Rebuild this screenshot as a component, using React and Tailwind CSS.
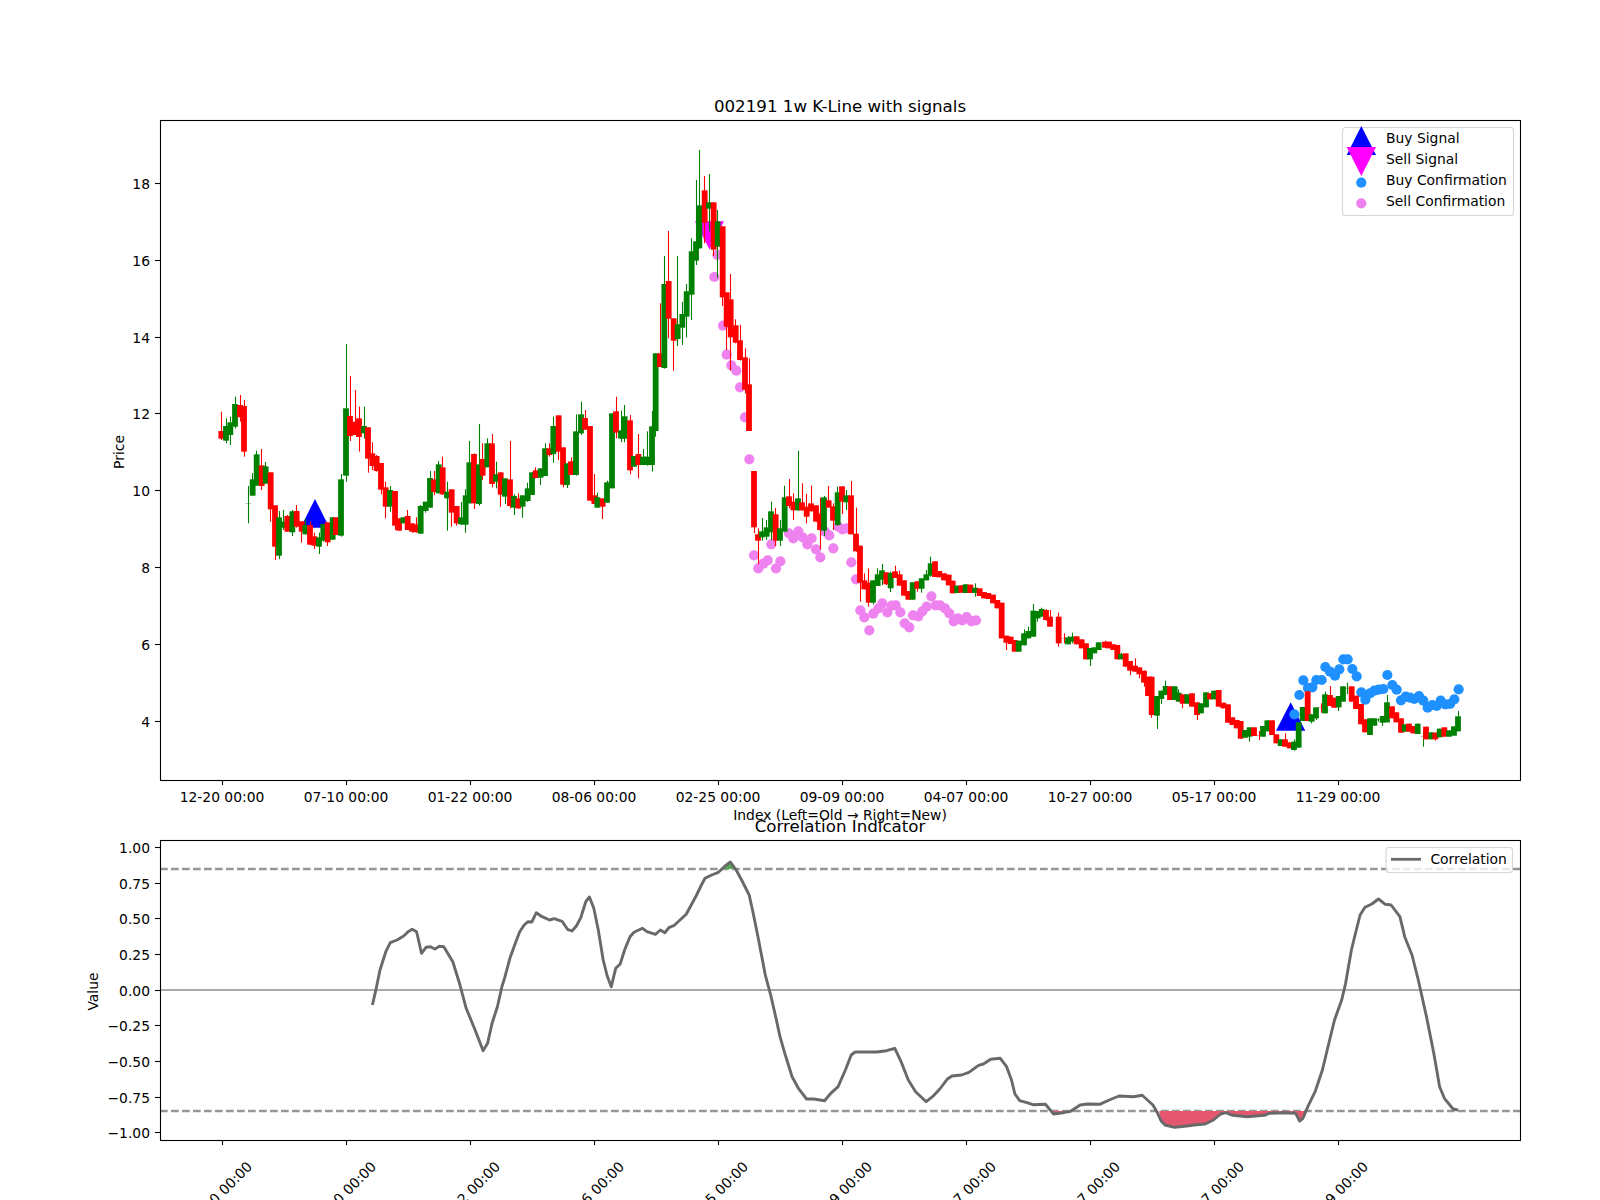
const RED = "#ff0000";
const GREEN = "#008000";

// rows: [x, isRed, bodyTop, bodyBottom, wickTop?, wickBottom?] in crop coordinates
const scale = (ox, oy, rows) =>
  rows.map(([x, r, t, b, wt = t, wb = b]) => ({
    x: ox + x / 3,
    r,
    t: oy + t / 3,
    b: oy + b / 3,
    wt: oy + wt / 3,
    wb: oy + wb / 3,
  }));

const candles = [
  ...scale(200, 360, [
    [64,1,213,236,155,240],[78,0,198,242,175,250],[91,0,187,225,170,255],[105,0,132,200,110,205],[120,1,135,172,105,185],[132,1,138,275,120,290],
    [145,0,430,431,378,490],[158,0,358,407,340,407],[170,0,283,377,272,377],[185,1,316,378,267,390],[197,0,319,371,306,371],[212,1,337,448,337,485],
    [225,1,436,560,436,600],[237,0,472,587,453,597],[250,0,485,503,450,510],[262,1,468,515,465,516],[277,0,454,517,450,528],[290,1,453,500,435,503],
    [305,1,484,515,484,548],[316,0,495,523,475,523],[330,1,495,554,485,555],[343,1,529,557,518,567],[357,0,532,560,518,582],[370,0,492,542,492,545],
    [383,1,487,547,487,558],[398,0,472,539,472,540],[408,1,472,525],[423,0,358,527,342,530],[438,0,145,347,-48,365],[450,1,168,228,48,243],
    [465,1,185,225,90,225],[477,1,175,231,140,275],[492,0,198,220,140,236],[504,1,202,296,202,338],[517,1,280,318,247,330],[530,1,288,333,285,335],
    [543,1,309,389,309,403],[557,1,382,440,365,475],[570,0,390,440,378,455],[585,1,393,497,393,510],[597,1,475,512],[610,0,472,490],
    [623,1,468,510,450,510],[636,1,490,515,490,518],[648,1,493,517,472,518],[662,0,438,521,435,521],[677,0,425,453,425,458],[690,0,354,443,333,443],
    [702,1,358,396,333,405],[716,0,313,400,303,400],[728,1,322,403,290,405],[741,0,395,415,365,512],[755,1,388,458,388,500],[770,1,438,490,438,497],
    [783,0,472,493,426,495],[797,0,406,494,388,518],[808,0,307,430,243,430],[822,1,282,430,280,447],[837,0,313,432,192,437],
  ]),
  ...scale(480, 360, [
    [8,1,297,347,250,360],[22,0,250,322,235,322],[36,1,250,372,222,382],[48,0,343,365,305,385],[62,1,337,404,337,440],[75,0,355,410,355,432],
    [90,1,358,438,243,445],[102,0,408,443,403,465],[115,1,415,445,400,447],[128,0,406,440,406,473],[143,0,385,423,368,426],[156,0,337,405],
    [167,1,331,354,322,355],[182,0,325,353,325,375],[195,0,265,348,250,348],[208,1,265,285,250,290],[220,0,198,282,170,308],[236,1,166,275,166,300],
    [249,1,262,374,262,382],[261,0,310,375,310,384],[273,1,304,345,292,345],[288,0,214,345,163,347],[303,0,163,220,125,225],[315,1,174,209,150,209],
    [330,1,198,422],[343,1,406,432,342,432],[352,0,412,443,398,443],[368,1,415,440,415,477],[381,0,367,428,362,428],[396,0,160,385],
    [408,1,154,218,110,235],[423,0,211,236,152,247],[434,0,169,236,135,247],[450,1,181,331,165,343],[462,0,288,320],[475,1,282,315,222,355],
    [489,0,290,315,267,315],[502,0,290,315,214,317],[516,0,199,315,153,335],
  ]),
  ...scale(620, 130, [
    [107,0,670,903,670,920],[120,1,670,711,520,711],[133,0,462,714,378,716],[146,1,453,566,303,625],[161,1,565,632,565,722],[173,0,583,627,378,648],
    [187,0,552,593,515,645],[200,0,484,560,462,622],[215,0,364,494,325,570],[228,0,334,392,150,405],[238,0,226,355,60,355],[254,1,181,278,138,340],
    [267,0,217,236,132,303],[281,1,217,359,217,378],[293,0,274,350,240,443],[308,1,289,502,289,528],[320,1,487,590,487,660],[332,1,508,622,432,722],
    [347,1,586,638,568,640],[360,1,631,690,585,692],[375,1,682,779,655,790],[387,1,763,903,685,903],
  ]),
  ...scale(730, 420, [
    [72,1,153,322,153,340],[84,1,343,362,325,432],[96,0,334,352,294,362],[110,0,322,350,300,360],[123,0,274,337,245,360],[137,1,283,362,264,378],
    [150,0,325,362,300,378],[164,0,232,335,197,335],[177,1,229,258,177,265],[190,1,245,271,220,300],[204,0,235,271,92,272],[216,1,247,271,190,272],
    [230,1,260,290,222,310],[243,1,250,274,197,274],[258,1,256,305],[270,1,281,330,233,388],[282,0,232,332,228,348],[296,1,241,263,198,263],
    [309,1,259,302,250,330],[323,0,217,315,200,318],[336,1,199,245,199,282],[349,0,226,247,210,270],[363,1,226,343,183,343],[378,1,341,394,263,395],
    [390,1,377,488,377,545],[403,1,481,508,460,508],[416,1,488,548,445,560],[429,0,481,548,481,553],[443,0,463,498,445,498],[456,0,451,479,432,495],
    [469,1,457,493,457,495],[482,0,459,505,455,516],[495,1,454,474,437,474],[509,1,463,497,452,497],[522,1,481,527],[535,1,513,539],[548,0,487,539],
    [562,1,484,506,484,515],[575,0,475,506,475,518],[589,0,463,481,450,481],[602,0,430,467,410,470],[615,1,424,471],[628,1,453,472],[642,1,460,481],
    [656,1,464,496],[668,1,482,520],[681,0,497,519],[694,1,496,518],[707,0,493,519],[721,1,494,519],[735,0,503,519,490,530],[749,1,505,528],
    [762,1,516,535],[775,1,519,537],[789,1,524,550],[802,1,540,565],[815,1,548,655],[829,1,647,668,647,690],[842,1,650,672],[854,1,660,695],
    [866,0,662,695],[882,0,640,676,628,676],[895,0,633,655,620,655],
  ]),
  ...scale(1010, 560, [
    [70,0,152,230,132,230],[83,0,153,175,153,185],[95,0,147,170,143,170],[108,1,150,180,148,182],[120,1,170,200,150,200],[146,1,170,250,158,260],
    [163,1,235,236,220,250],[174,0,232,253,228,253],[187,0,230,245,218,250],[200,1,229,253],[215,1,238,265],[228,1,250,298],[240,0,264,298,264,318],
    [253,0,262,280],[266,0,247,270],[285,1,245,263,242,265],[297,1,245,265],[310,1,253,270],[322,1,255,298],[333,0,282,298,278,298],[347,1,280,320],
    [360,1,303,332,303,345],[375,1,317,335,295,335],[388,1,322,343,322,355],[402,1,332,368,332,380],[414,1,350,408],[425,1,350,465,350,473],
    [441,0,408,467,408,507],[454,0,392,417,392,432],[467,0,378,405,362,405],[480,1,379,420],[494,0,379,420],[506,0,398,425,388,425],[518,1,403,431,403,445],
    [532,0,403,431],[546,1,400,440],[561,1,427,465,427,480],[573,0,430,460],[588,0,397,442],[600,1,400,418],[612,0,392,418],[626,1,390,440],[640,1,428,445],
    [654,1,433,488],[667,1,472,495],[680,1,480,505],[692,1,483,536],[705,0,510,533],[719,0,502,530,502,545],[732,1,502,528],[747,1,526,527,513,540],
    [759,0,498,530],[772,0,481,514],[786,1,481,525],[799,1,523,550],[812,0,538,558],[825,1,538,560,520,560],[839,1,547,565],[852,0,545,570,538,572],
    [866,0,487,563],[878,0,441,483],[893,1,394,483],
  ]),
  ...scale(1260, 630, [
    [155,0,253,275,253,280],[168,0,232,265,232,270],[183,1,233,234,220,248],[195,0,193,250,185,250],[210,1,195,228,168,228],[222,1,203,233],
    [236,0,198,232,198,243],[249,0,169,215],[263,0,175,176,158,192],[275,1,169,215],[288,1,197,237],[303,1,222,283],[315,1,268,307],[330,0,265,315],
    [343,0,265,287],[355,0,269,270,265,275],[368,0,258,278,258,288],[381,0,217,277,195,277],[396,1,229,265],[409,1,247,277],[423,1,265,308],[434,0,283,305],
    [447,1,281,305],[460,1,288,310],[473,0,281,312],[490,0,320,321,305,350],[498,1,290,328],[514,0,307,328],[526,1,308,328,308,332],[539,0,296,322],
    [553,1,292,320],[567,0,301,320],[582,0,289,317],[594,0,259,304,243,304],
  ]),
];

const violet = [
  ...[[292,375],[283,441],[309,587],[320,674],[334,706],[349,722],[360,772],[375,862]].map(([x, y]) => [620 + x / 3, 130 + y / 3]),
  ...[[58,118],[72,406],[85,445],[100,431],[113,421],[124,373],[138,445],[151,424],[177,340],[190,355],[205,334],[218,352],[232,373],[245,355],[258,388],[271,412],[285,335],[298,346],[310,385],[325,320],[337,328],[350,325],[364,427],[378,478],[391,571],[403,592],[418,631],[430,581],[445,565],[457,550],[472,577],[485,557],[497,556],[511,577],[524,610],[538,622],[549,586],[565,589],[577,574],[590,560],[604,529],[617,556],[630,556],[645,565],[658,580],[671,604],[684,595],[697,601],[710,591],[724,604],[738,601]].map(([x, y]) => [730 + x / 3, 420 + y / 3]),
];

const blue = [[103,253],[118,195],[130,151],[144,174],[157,172],[169,150],[185,150],[196,111],[210,125],[225,137],[238,118],[250,88],[263,88],[277,117],[290,139],[304,187],[316,209],[330,190],[343,182],[356,179],[370,177],[382,135],[397,165],[410,179],[423,211],[437,200],[450,203],[463,207],[477,198],[490,212],[503,233],[517,225],[530,228],[542,212],[556,223],[570,222],[583,208],[596,178]].map(([x, y]) => [1260 + x / 3, 630 + y / 3]);

const c9 = ([x, y]) => [80 + x / 2.24, 790 + y / 3];
const c10 = ([x, y]) => [780 + x / 2.065, 790 + y / 3];
const toPts = (a) => a.map(([x, y]) => `${x.toFixed(1)},${y.toFixed(1)}`).join(" ");

const corr = [
  ...[[655,645],[662,605],[672,540],[685,485],[695,458],[710,450],[725,438],[735,425],[744,418],[754,425],[765,490],[775,472],[785,470],[795,477],[805,469],[815,470],[835,515],[850,580],[865,655],[885,720],[903,782],[913,760],[923,700],[935,650],[945,590],[952,560],[963,505],[975,460],[985,425],[995,405],[1003,395],[1012,396],[1022,368],[1035,380],[1052,390],[1062,386],[1080,394],[1092,418],[1102,423],[1112,408],[1122,382],[1133,335],[1141,321],[1151,355],[1161,420],[1172,510],[1181,558],[1190,590],[1200,535],[1210,522],[1220,480],[1232,440],[1241,427],[1260,415],[1270,425],[1289,433],[1300,420],[1310,428],[1320,412],[1330,407],[1358,373],[1380,318],[1392,285],[1400,265],[1415,255],[1430,247],[1445,228],[1457,216],[1470,240],[1482,270],[1499,315],[1508,370],[1520,450],[1535,555],[1548,620],[1560,690],[1568,740]].map(c9),
  ...[[10,790],[25,860],[38,895],[55,927],[70,927],[92,932],[105,910],[120,890],[135,840],[147,795],[155,786],[170,786],[200,786],[220,782],[237,775],[250,815],[265,870],[280,905],[302,935],[315,920],[330,897],[345,868],[355,858],[375,855],[390,847],[410,826],[420,822],[435,808],[455,805],[468,830],[478,870],[485,912],[495,932],[510,938],[522,944],[548,943],[565,972],[585,968],[600,964],[620,945],[635,942],[660,943],[680,930],[700,918],[730,920],[748,916],[770,945],[780,970],[787,993],[795,1005],[815,1012],[840,1008],[860,1004],[878,1002],[895,990],[910,972],[920,968],[935,976],[965,980],[1000,976],[1010,970],[1040,968],[1065,970],[1073,993],[1080,985],[1090,950],[1105,905],[1120,840],[1130,780],[1145,690],[1160,630],[1168,580],[1180,480],[1190,420],[1198,375],[1208,352],[1222,342],[1236,327],[1250,343],[1262,345],[1280,380],[1290,440],[1305,495],[1318,570],[1335,680],[1350,790],[1362,890],[1372,925],[1390,957],[1400,960]].map(c10),
];

const fillRed1 = [[558,963],[565,972],[585,968],[597,963]].map(c10);
const fillRed2 = [[783,963],[787,993],[795,1005],[815,1012],[840,1008],[860,1004],[878,1002],[895,990],[910,972],[920,968],[935,976],[965,980],[1000,976],[1010,970],[1040,968],[1065,970],[1073,993],[1080,985],[1086,963]].map(c10);
const fillGreen = [[1437,237],[1445,228],[1457,216],[1468,237]].map(c9);

const xTicks = [
  [222.5, "12-20 00:00"], [346.5, "07-10 00:00"], [470.5, "01-22 00:00"], [594.5, "08-06 00:00"], [718.5, "02-25 00:00"],
  [842.5, "09-09 00:00"], [966.5, "04-07 00:00"], [1090.5, "10-27 00:00"], [1214.5, "05-17 00:00"], [1338.5, "11-29 00:00"],
];
const snap = (v) => Math.floor(v) + 0.5;
const yMain = [18, 16, 14, 12, 10, 8, 6, 4].map((v) => [snap(183.4 + (18 - v) * 38.41), String(v)]);
const yLow = [
  ["1.00", 1], ["0.75", 0.75], ["0.50", 0.5], ["0.25", 0.25], ["0.00", 0],
  ["\u22120.25", -0.25], ["\u22120.50", -0.5], ["\u22120.75", -0.75], ["\u22121.00", -1],
].map(([s, v]) => [snap(990.2 - v * 142.6), s]);

function Ticks() {
  return (
    <g stroke="#000" strokeWidth="1.1">
      {xTicks.map(([x]) => (
        <g key={x}>
          <line x1={x} x2={x} y1="780" y2="785" />
          <line x1={x} x2={x} y1="1140" y2="1145" />
        </g>
      ))}
      {yMain.map(([y]) => <line key={y} x1="155" x2="160" y1={y} y2={y} />)}
      {yLow.map(([y]) => <line key={y} x1="155" x2="160" y1={y} y2={y} />)}
    </g>
  );
}

export default function App() {
  return (
    <div className="w-[1600px] h-[1200px] bg-white overflow-hidden">
      <svg width="1600" height="1200" viewBox="0 0 1600 1200" className="block font-['DejaVu_Sans',sans-serif] text-[13.89px]">
        <text x="840" y="111.7" textAnchor="middle" className="text-[16.67px]">002191 1w K-Line with signals</text>

        {/* main panel markers */}
        <polygon points="315,499 300.5,527.7 329.5,527.7" fill="#0000ff" />
        <polygon points="1290.7,702.3 1276,730.7 1305.3,730.7" fill="#0000ff" />
        <polygon points="695,221.3 724,221.3 709.5,249.6" fill="#ff00ff" />
        {violet.map(([x, y], i) => <circle key={i} cx={x} cy={y} r="5.1" fill="#ee82ee" />)}
        {blue.map(([x, y], i) => <circle key={i} cx={x} cy={y} r="5.1" fill="#1e90ff" />)}

        {candles.map((c, i) => (
          <g key={i} fill={c.r ? RED : GREEN} stroke={c.r ? RED : GREEN}>
            <line x1={snap(c.x)} x2={snap(c.x)} y1={c.wt} y2={c.wb} strokeWidth="1.1" />
            <rect x={c.x - 2.9} y={c.t} width="5.8" height={Math.max(c.b - c.t, 0.3)} stroke="none" />
          </g>
        ))}

        <rect x="160.5" y="120.5" width="1360" height="660" fill="none" stroke="#000" strokeWidth="1.1" />

        {/* legend */}
        <rect x="1342.5" y="127.5" width="171" height="88" rx="3" fill="#fff" fillOpacity="0.8" stroke="#ccc" strokeOpacity="0.8" strokeWidth="1.1" />
        <polygon points="1361.3,126 1346.7,155 1376,155" fill="#0000ff" />
        <polygon points="1346.7,147 1376,147 1361.3,176" fill="#ff00ff" />
        <circle cx="1361.3" cy="182.7" r="5.1" fill="#1e90ff" />
        <circle cx="1361.3" cy="203.3" r="5.1" fill="#ee82ee" />
        <text x="1386" y="143.3">Buy Signal</text>
        <text x="1386" y="164.3">Sell Signal</text>
        <text x="1386" y="185">Buy Confirmation</text>
        <text x="1386" y="206">Sell Confirmation</text>

        {/* labels of the main panel */}
        {xTicks.map(([x, s]) => <text key={s} x={x - 0.5} y="802" textAnchor="middle">{s}</text>)}
        {yMain.map(([y, s]) => <text key={s} x="150" y={y + 5} textAnchor="end">{s}</text>)}
        <text x="840" y="820" textAnchor="middle">Index (Left=Old → Right=New)</text>
        <text transform="translate(124,452) rotate(-90)" textAnchor="middle">Price</text>

        <text x="840" y="831.7" textAnchor="middle" className="text-[16.67px]">Correlation Indicator</text>

        {/* lower panel */}
        <line x1="160" x2="1520" y1="869" y2="869" stroke="#969696" strokeWidth="2.4" strokeDasharray="7.7 3.3" />
        <line x1="160" x2="1520" y1="1111" y2="1111" stroke="#969696" strokeWidth="2.4" strokeDasharray="7.7 3.3" />
        <line x1="160" x2="1520" y1="990" y2="990" stroke="#aaaaaa" strokeWidth="2" />
        <polygon points={toPts(fillRed1)} fill="#e5566f" />
        <polygon points={toPts(fillRed2)} fill="#e5566f" />
        <polygon points={toPts(fillGreen)} fill="#55aa55" />
        <polyline points={toPts(corr)} fill="none" stroke="#696969" strokeWidth="2.9" strokeLinejoin="round" />
        <rect x="160.5" y="840.5" width="1360" height="300" fill="none" stroke="#000" strokeWidth="1.1" />

        <rect x="1386" y="847.5" width="126.5" height="25" rx="3" fill="#fff" fillOpacity="0.8" stroke="#ccc" strokeOpacity="0.8" strokeWidth="1.1" />
        <line x1="1391" x2="1421" y1="859.3" y2="859.3" stroke="#696969" strokeWidth="2.78" />
        <text x="1430.4" y="864.3">Correlation</text>

        {yLow.map(([y, s]) => <text key={s} x="150" y={y + 5} textAnchor="end">{s}</text>)}
        <text transform="translate(98,991.5) rotate(-90)" textAnchor="middle">Value</text>
        {xTicks.map(([x, s]) => (
          <text key={s} transform={`translate(${x + 0.5},1197.5) rotate(-45)`} textAnchor="middle">{s}</text>
        ))}

        <Ticks />
      </svg>
    </div>
  );
}
